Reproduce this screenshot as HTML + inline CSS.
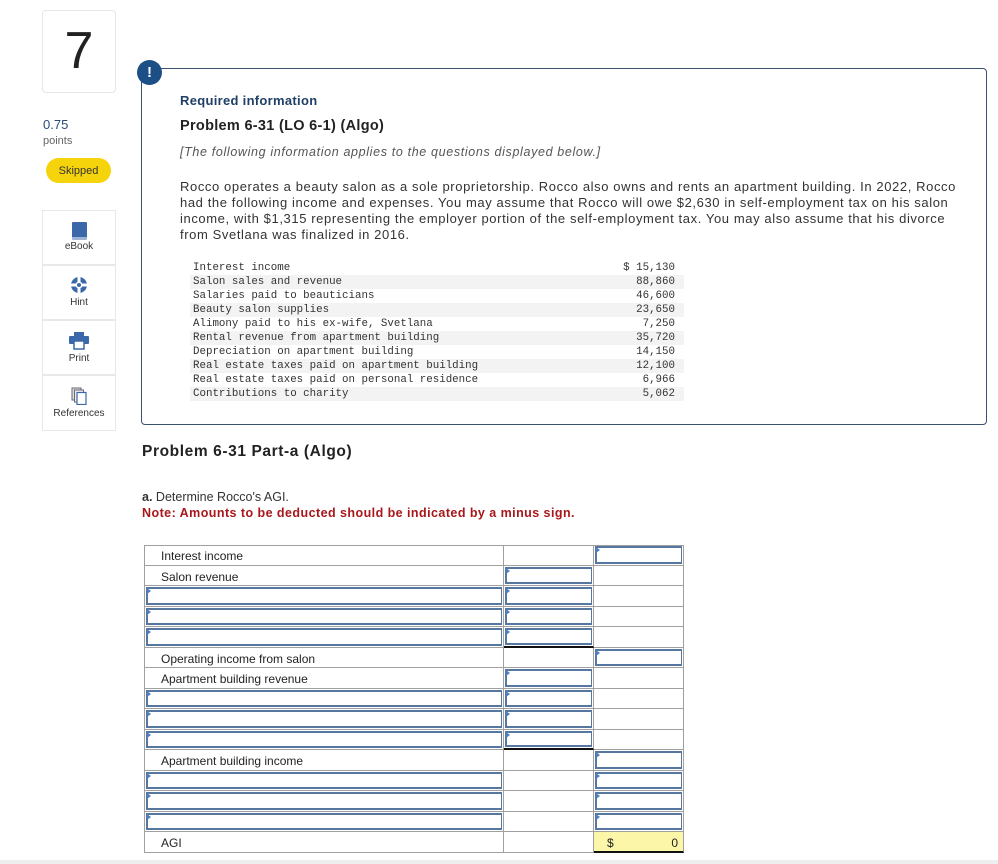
<!DOCTYPE html>
<html><head><meta charset="utf-8"><style>
*{box-sizing:border-box;margin:0;padding:0}
body{width:998px;height:864px;background:#fff;position:relative;overflow:hidden;font-family:"Liberation Sans",sans-serif;color:#222}
.a{position:absolute}
.side{left:42px;width:74px;border:1px solid #e6e6e6;border-radius:3px}
.tool{position:absolute;left:42px;width:74px;height:55px;text-align:center;font-size:10px;color:#333;border:1px solid #e8e8e8}
.mono{font-family:"Liberation Mono",monospace;font-size:10.8px;color:#333}
.dr{position:absolute;left:190px;width:494px;height:14px;line-height:14px;padding-left:3px}
.dr span{position:absolute;right:9px}
.dr.g{background:#f3f3f3}
.r{position:absolute;left:144px;width:540px}
.c{position:absolute;top:0;bottom:0;border-right:1px solid #a0a0a0;border-bottom:1px solid #a0a0a0;font-size:12px;line-height:22px;color:#222}
.c1{left:0;width:360px;border-left:1px solid #a0a0a0;padding-left:16px}
.c2{left:360px;width:90px}
.c3{left:450px;width:90px}
.in{position:absolute;left:1px;top:1px;right:1px;bottom:1px;border:2px solid #56779f;border-right-width:1px}
.in:before{content:"";position:absolute;left:-1px;top:-1px;border-left:4px solid #4f7fbf;border-top:3px solid transparent;border-bottom:3px solid transparent}
</style></head><body>
<div class="a side" style="top:10px;height:83px;border-radius:4px;text-align:center;font-size:52px;line-height:80px;color:#222">7</div>
<div class="a" style="left:43px;top:117px;font-size:13px;color:#2b4a7a">0.75</div>
<div class="a" style="left:43px;top:135px;font-size:11px;color:#666">points</div>
<div class="a" style="left:46px;top:158px;width:65px;height:25px;background:#f6d40b;border-radius:13px;font-size:11px;line-height:27px;text-align:center;color:#333">Skipped</div>
<div class="tool" style="top:210px">
<div style="margin:11px auto 0;width:15px;height:18px;background:#3b68a8;border-radius:1px;border-bottom:3px solid #9db4d6"></div><div style="margin-top:1px">eBook</div></div>
<div class="tool" style="top:265px">
<svg width="18" height="18" style="margin-top:10px" viewBox="0 0 18 18"><circle cx="9" cy="9" r="8" fill="#3b68a8"/><circle cx="9" cy="9" r="3.5" fill="#fff"/><rect x="7.5" y="1" width="3" height="16" fill="#fff"/><rect x="1" y="7.5" width="16" height="3" fill="#fff"/><circle cx="9" cy="9" r="2" fill="#3b68a8"/></svg><div>Hint</div></div>
<div class="tool" style="top:320px">
<svg width="20" height="18" style="margin-top:11px" viewBox="0 0 20 18"><rect x="5" y="0" width="10" height="4" fill="#3b68a8"/><rect x="0" y="4" width="20" height="8" rx="1" fill="#3b68a8"/><rect x="5" y="9" width="10" height="8" fill="#fff" stroke="#3b68a8" stroke-width="1.5"/></svg><div>Print</div></div>
<div class="tool" style="top:375px;height:56px">
<svg width="16" height="18" style="margin-top:11px" viewBox="0 0 16 18"><rect x="1" y="1" width="9" height="12" fill="#ddd" stroke="#667" stroke-width="1"/><rect x="3.5" y="3" width="9" height="12" fill="#eee" stroke="#667" stroke-width="1"/><rect x="6" y="5.5" width="9" height="12" fill="#fff" stroke="#3b68a8" stroke-width="1.2"/></svg><div>References</div></div>

<div class="a" style="left:141px;top:68px;width:846px;height:357px;border:1px solid #3a506e;border-radius:4px"></div>
<div class="a" style="left:137px;top:60px;width:25px;height:25px;border-radius:50%;background:#1c4f86;color:#fff;font-weight:bold;font-size:15px;text-align:center;line-height:25px">!</div>
<div class="a" style="left:180px;top:93px;font-size:13px;font-weight:bold;color:#1f3f66;letter-spacing:.3px">Required information</div>
<div class="a" style="left:180px;top:118px;font-size:14.5px;font-weight:bold;color:#222;letter-spacing:.3px">Problem 6-31 (LO 6-1) (Algo)</div>
<div class="a" style="left:180px;top:145px;font-size:12.5px;font-style:italic;color:#555;letter-spacing:.65px">[The following information applies to the questions displayed below.]</div>
<div class="a" style="left:180px;top:179px;width:780px;font-size:13px;letter-spacing:.6px;line-height:16px;color:#333">Rocco operates a beauty salon as a sole proprietorship. Rocco also owns and rents an apartment building. In 2022, Rocco had the following income and expenses. You may assume that Rocco will owe $2,630 in self-employment tax on his salon income, with $1,315 representing the employer portion of the self-employment tax. You may also assume that his divorce from Svetlana was finalized in 2016.</div>
<div class="mono">
<div class="dr" style="top:261px">Interest income<span>$ 15,130</span></div>
<div class="dr g" style="top:275px">Salon sales and revenue<span>88,860</span></div>
<div class="dr" style="top:289px">Salaries paid to beauticians<span>46,600</span></div>
<div class="dr g" style="top:303px">Beauty salon supplies<span>23,650</span></div>
<div class="dr" style="top:317px">Alimony paid to his ex-wife, Svetlana<span>7,250</span></div>
<div class="dr g" style="top:331px">Rental revenue from apartment building<span>35,720</span></div>
<div class="dr" style="top:345px">Depreciation on apartment building<span>14,150</span></div>
<div class="dr g" style="top:359px">Real estate taxes paid on apartment building<span>12,100</span></div>
<div class="dr" style="top:373px">Real estate taxes paid on personal residence<span>6,966</span></div>
<div class="dr g" style="top:387px">Contributions to charity<span>5,062</span></div>
</div>
<div class="a" style="left:142px;top:443px;font-size:15.5px;font-weight:bold;color:#222;letter-spacing:.6px">Problem 6-31 Part-a (Algo)</div>
<div class="a" style="left:142px;top:490px;font-size:12.5px;color:#333"><b>a.</b> Determine Rocco's AGI.</div>
<div class="a" style="left:142px;top:506px;font-size:12.5px;font-weight:bold;color:#a8171b;letter-spacing:.45px">Note: Amounts to be deducted should be indicated by a minus sign.</div>

<div class="a" style="left:144px;top:545px;width:540px;border-top:1px solid #a0a0a0"></div>
<div class="r" style="top:545px;height:21px"><div class="c c1">Interest income</div><div class="c c2"></div><div class="c c3"><div class="in"></div></div></div>
<div class="r" style="top:566px;height:20px"><div class="c c1">Salon revenue</div><div class="c c2"><div class="in"></div></div><div class="c c3"></div></div>
<div class="r" style="top:586px;height:21px"><div class="c c1"><div class="in"></div></div><div class="c c2"><div class="in"></div></div><div class="c c3"></div></div>
<div class="r" style="top:607px;height:20px"><div class="c c1"><div class="in"></div></div><div class="c c2"><div class="in"></div></div><div class="c c3"></div></div>
<div class="r" style="top:627px;height:21px"><div class="c c1"><div class="in"></div></div><div class="c c2" style="border-bottom:2px solid #111"><div class="in"></div></div><div class="c c3"></div></div>
<div class="r" style="top:648px;height:20px"><div class="c c1">Operating income from salon</div><div class="c c2"></div><div class="c c3"><div class="in"></div></div></div>
<div class="r" style="top:668px;height:21px"><div class="c c1">Apartment building revenue</div><div class="c c2"><div class="in"></div></div><div class="c c3"></div></div>
<div class="r" style="top:689px;height:20px"><div class="c c1"><div class="in"></div></div><div class="c c2"><div class="in"></div></div><div class="c c3"></div></div>
<div class="r" style="top:709px;height:21px"><div class="c c1"><div class="in"></div></div><div class="c c2"><div class="in"></div></div><div class="c c3"></div></div>
<div class="r" style="top:730px;height:20px"><div class="c c1"><div class="in"></div></div><div class="c c2" style="border-bottom:2px solid #111"><div class="in"></div></div><div class="c c3"></div></div>
<div class="r" style="top:750px;height:21px"><div class="c c1">Apartment building income</div><div class="c c2"></div><div class="c c3"><div class="in"></div></div></div>
<div class="r" style="top:771px;height:20px"><div class="c c1"><div class="in"></div></div><div class="c c2"></div><div class="c c3"><div class="in"></div></div></div>
<div class="r" style="top:791px;height:21px"><div class="c c1"><div class="in"></div></div><div class="c c2"></div><div class="c c3"><div class="in"></div></div></div>
<div class="r" style="top:812px;height:20px"><div class="c c1"><div class="in"></div></div><div class="c c2"></div><div class="c c3"><div class="in"></div></div></div>
<div class="r" style="top:832px;height:21px"><div class="c c1">AGI</div><div class="c c2"></div><div class="c c3" style="background:#fbf6a8;border-bottom:2px solid #111;padding:0 5px"><span style="margin-left:8px">$</span><span style="float:right">0</span></div></div>
<div class="a" style="left:0;top:860px;width:998px;height:4px;background:#eee"></div>
</body></html>
